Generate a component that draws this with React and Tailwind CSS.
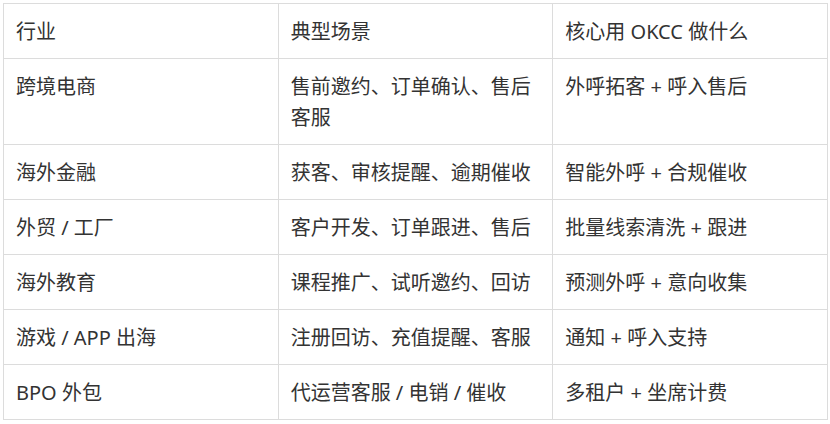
export default function App() {
  const rows = [
    ["跨境电商", "售前邀约、订单确认、售后客服", "外呼拓客 + 呼入售后"],
    ["海外金融", "获客、审核提醒、逾期催收", "智能外呼 + 合规催收"],
    ["外贸 / 工厂", "客户开发、订单跟进、售后", "批量线索清洗 + 跟进"],
    ["海外教育", "课程推广、试听邀约、回访", "预测外呼 + 意向收集"],
    ["游戏 / APP 出海", "注册回访、充值提醒、客服", "通知 + 呼入支持"],
    ["BPO 外包", "代运营客服 / 电销 / 催收", "多租户 + 坐席计费"],
  ];
  const cell = "border border-[#dcdcdc] px-3 pt-3 pb-[11px] align-top text-left font-normal";
  return (
    <div className="bg-white w-[830px] h-[424px] pt-[3px] pl-[3px]">
      <table
        className="w-[825px] border-collapse table-fixed text-[20px] leading-[31px] text-[#333333]"
        style={{ fontFamily: '"Noto Sans", "Noto Sans CJK SC", sans-serif' }}
      >
        <thead>
          <tr>
            <th className={cell}>行业</th>
            <th className={cell}>典型场景</th>
            <th className={cell}>核心用 OKCC 做什么</th>
          </tr>
        </thead>
        <tbody>
          {rows.map((r, i) => (
            <tr key={i}>
              {r.map((c, j) => (
                <td key={j} className={cell}>{c}</td>
              ))}
            </tr>
          ))}
        </tbody>
      </table>
    </div>
  );
}
